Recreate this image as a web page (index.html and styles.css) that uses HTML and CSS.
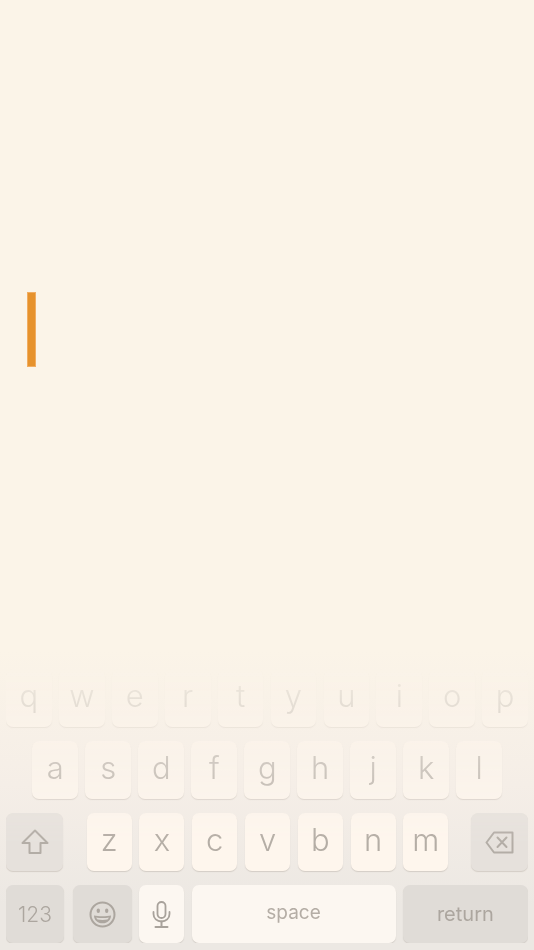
FILE: index.html
```html
<!DOCTYPE html>
<html lang="en">
<head>
    <meta charset="UTF-8">
    <meta name="viewport" content="width=device-width, initial-scale=1.0">
    <title>Editor</title>
    <link rel="stylesheet" href="styles.css">
</head>
<body>
    <div class="screen">
        <div class="editor">
            <div class="cursor"></div>
        </div>

        <div class="keyboard">
            <div class="keys">
                <div class="row">
                    <div class="key letter">q</div>
                    <div class="key letter">w</div>
                    <div class="key letter">e</div>
                    <div class="key letter">r</div>
                    <div class="key letter">t</div>
                    <div class="key letter">y</div>
                    <div class="key letter">u</div>
                    <div class="key letter">i</div>
                    <div class="key letter">o</div>
                    <div class="key letter">p</div>
                </div>
                <div class="row row-home">
                    <div class="key letter">a</div>
                    <div class="key letter">s</div>
                    <div class="key letter">d</div>
                    <div class="key letter">f</div>
                    <div class="key letter">g</div>
                    <div class="key letter">h</div>
                    <div class="key letter">j</div>
                    <div class="key letter">k</div>
                    <div class="key letter">l</div>
                </div>
                <div class="row row-shift">
                    <div class="key fn modifier">
                        <svg width="28" height="26" viewBox="0 0 28 26" fill="none" stroke="currentColor" stroke-width="2" stroke-linejoin="round">
                            <path d="M14 1.5 L1.5 14 H8.5 V24 H19.5 V14 H26.5 Z"/>
                        </svg>
                    </div>
                    <div class="letters">
                        <div class="key letter">z</div>
                        <div class="key letter">x</div>
                        <div class="key letter">c</div>
                        <div class="key letter">v</div>
                        <div class="key letter">b</div>
                        <div class="key letter">n</div>
                        <div class="key letter">m</div>
                    </div>
                    <div class="key fn modifier">
                        <svg width="29" height="23" viewBox="0 0 29 23" fill="none" stroke="currentColor" stroke-width="2" stroke-linejoin="round">
                            <path d="M9 1.5 H27.5 V21.5 H9 L1.5 11.5 Z"/>
                            <path d="M12.5 6.5 L21.5 16 M21.5 6.5 L12.5 16" stroke-linecap="round"/>
                        </svg>
                    </div>
                </div>
                <div class="row row-bottom">
                    <div class="key fn numbers">123</div>
                    <div class="key fn emoji">
                        <svg width="27" height="27" viewBox="0 0 27 27" fill="none" stroke="currentColor" stroke-width="2">
                            <circle cx="13.5" cy="13.5" r="12"/>
                            <ellipse cx="9.3" cy="9.8" rx="1.7" ry="2.2" fill="currentColor" stroke="none"/>
                            <ellipse cx="17.7" cy="9.8" rx="1.7" ry="2.2" fill="currentColor" stroke="none"/>
                            <path d="M5 14.5 C9 15.6 18 15.6 22 14.5 C22 19 18.5 22.3 13.5 22.3 C8.5 22.3 5 19 5 14.5 Z" fill="currentColor" stroke="none"/>
                            <path d="M7.2 16.4 C10.5 17.2 16.5 17.2 19.8 16.4 C19.4 17.4 19 18 18.4 18.6 C15.5 19.1 11.5 19.1 8.6 18.6 C8 18 7.6 17.4 7.2 16.4 Z" fill="#e0dcd7" stroke="none"/>
                        </svg>
                    </div>
                    <div class="key mic">
                        <svg width="19" height="27" viewBox="0 0 19 27" fill="none" stroke="currentColor" stroke-width="1.8" stroke-linecap="round">
                            <rect x="5.5" y="1" width="8" height="16" rx="4"/>
                            <path d="M1.5 11 V13 C1.5 17.5 5 20.5 9.5 20.5 C14 20.5 17.5 17.5 17.5 13 V11"/>
                            <path d="M9.5 20.5 V25.5 M3.5 26 H15.5" stroke-width="2"/>
                        </svg>
                    </div>
                    <div class="key space">space</div>
                    <div class="key fn return">return</div>
                </div>
            </div>
        </div>
    </div>
</body>
</html>
```

FILE: styles.css
```css
* {
    box-sizing: border-box;
}
body {
    margin: 0;
    font-family: Inter, "Liberation Sans", sans-serif;
    background-color: #fbf4e8;
}
.screen {
    display: flex;
    flex-direction: column;
    height: 950px;
    overflow: hidden;
}
.editor {
    flex: 1;
    padding: 292px 0 0 27px;
}
.cursor {
    width: 9px;
    height: 75px;
    background-color: #e6922c;
    border: 1px solid #f1ad62;
}
.keyboard {
    padding: 20px 6px 7px;
    background: linear-gradient(to bottom, #fbf4e8 0%, #f5eee7 45%, #ece8e3 85%);
}
.keys {
    display: flex;
    flex-direction: column;
    gap: 14px;
    -webkit-mask-image: linear-gradient(to bottom, rgba(0, 0, 0, 0.1) 0px, rgba(0, 0, 0, 0.6) 100px, #000 175px);
    mask-image: linear-gradient(to bottom, rgba(0, 0, 0, 0.1) 0px, rgba(0, 0, 0, 0.6) 100px, #000 175px);
}
.row {
    display: flex;
    height: 58px;
    gap: 7.2px;
}
.row-home {
    padding: 0 26px 0 26.4px;
}
.row-shift {
    justify-content: space-between;
}
.letters {
    display: flex;
    gap: 7.8px;
    margin-left: 1px;
}
.letters .key {
    flex: 0 0 45px;
}
.key {
    display: flex;
    align-items: center;
    justify-content: center;
    border-radius: 7px;
    background-color: #fef6ed;
    box-shadow: 0 1px 1px rgba(120, 105, 90, 0.22);
    color: #b4ada5;
}
.letter {
    flex: 1;
    font-size: 31px;
    font-weight: 300;
    padding-bottom: 6px;
}
.fn {
    background-color: #e0dcd7;
    color: #aca69f;
}
.modifier {
    width: 57px;
    background-color: #e6e1dc;
    color: #b3ada6;
}
.numbers {
    width: 58px;
    margin-right: 2px;
    font-size: 21px;
    font-weight: 300;
}
.emoji {
    width: 59px;
}
.mic {
    width: 45px;
    color: #a8a29b;
    background-color: #fcf7f1;
}
.space {
    width: 204px;
    background: #fcf7f1;
    font-size: 19px;
    padding-bottom: 3px;
}
.return {
    flex: 1;
    font-size: 20px;
}
```
